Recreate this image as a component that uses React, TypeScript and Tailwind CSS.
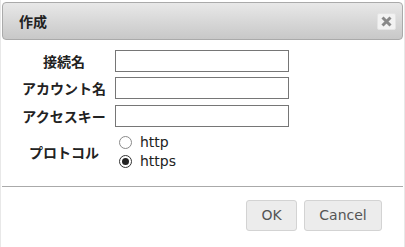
import React from "react";

const latin = { fontFamily: '"DejaVu Sans", "Noto Sans CJK JP", sans-serif' };
const jp = { fontFamily: '"Noto Sans CJK JP", sans-serif' };

function Row({ label, className }: { label: string; className?: string }) {
  return (
    <div className={`flex items-center h-[22px] ${className ?? ""}`}>
      <div className="w-[88px] text-center text-[14px] font-bold text-[#222] leading-none" style={jp}>
        {label}
      </div>
      <input className="ml-[7px] block w-[174px] h-[22px] border border-[#767676] bg-white outline-none" />
    </div>
  );
}

export default function App() {
  return (
    <div className="w-[405px] h-[247px] bg-white flex flex-col border-x border-[#e8e8e8] overflow-hidden" style={latin}>
      <div className="px-[1px] pt-[2px]">
        <div className="h-[38px] flex items-center justify-between rounded-[4px] border border-[#aaaaaa] bg-gradient-to-b from-[#e8e8e8] to-[#c8c8c8] pl-[16px] pr-[6px]">
          <span className="text-[14px] font-bold text-[#222] leading-none" style={jp}>作成</span>
          <div className="w-[19px] h-[17px] rounded-[2px] bg-[#f2f2f2] border border-[#e4e4e4] flex items-center justify-center">
            <svg width="11" height="11" viewBox="0 0 11 11">
              <path d="M1.5 1.5 L9.5 9.5 M9.5 1.5 L1.5 9.5" stroke="#888" strokeWidth="3" strokeLinecap="butt" />
            </svg>
          </div>
        </div>
      </div>
      <div className="pl-[19px] pt-[10px]">
        <Row label="接続名" />
        <Row label="アカウント名" className="mt-[5px]" />
        <Row label="アクセスキー" className="mt-[6px]" />
        <div className="flex items-center mt-[6px]">
          <div className="w-[88px] text-center text-[14px] font-bold text-[#222] leading-none" style={jp}>
            プロトコル
          </div>
          <div className="ml-[11px] flex flex-col text-[14px] text-[#222] leading-[19px]">
            <label className="flex items-center gap-[8px]">
              <span className="w-[13px] h-[13px] rounded-full border border-[#8a8a8a] bg-white" />
              <span>http</span>
            </label>
            <label className="flex items-center gap-[8px]">
              <span className="w-[13px] h-[13px] rounded-full border border-[#333] bg-white flex items-center justify-center">
                <span className="w-[7px] h-[7px] rounded-full bg-[#222]" />
              </span>
              <span>https</span>
            </label>
          </div>
        </div>
      </div>
      <div className="mt-[15px] mx-[1px] h-px bg-[#aaaaaa]" />
      <div className="flex justify-end gap-[7px] pr-[22px] pt-[13px]">
        <button className="h-[31px] w-[51px] rounded-[3px] border border-[#d3d3d3] bg-[#ececec] text-[14px] text-[#555]">OK</button>
        <button className="h-[31px] w-[78px] rounded-[3px] border border-[#d3d3d3] bg-[#ececec] text-[14px] text-[#555]">Cancel</button>
      </div>
    </div>
  );
}
